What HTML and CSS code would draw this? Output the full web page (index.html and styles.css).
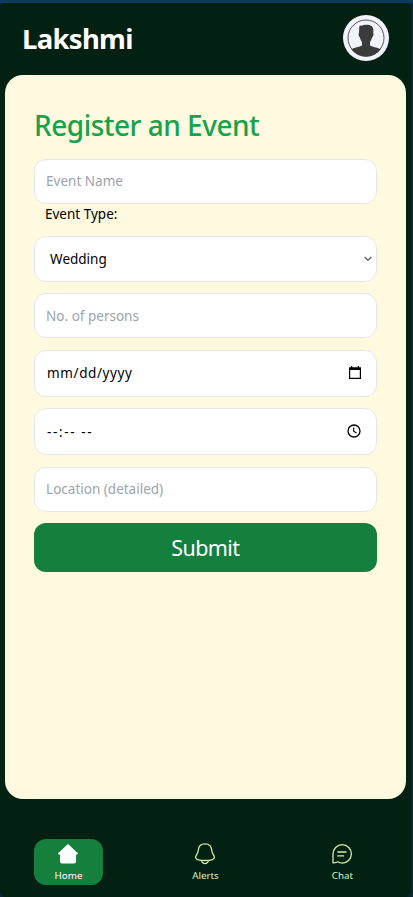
FILE: index.html
```html
<!DOCTYPE html>
<html lang="en">
<head>
<meta charset="utf-8">
<title>Register an Event</title>
<link rel="stylesheet" href="styles.css">
</head>
<body>
<div class="app">
  <header class="header">
    <h1 class="name"><span>Lakshmi</span></h1>
    <svg class="avatar" viewBox="0 0 46 46">
      <circle cx="23" cy="23" r="23" fill="#f3f3fd"/>
      <circle cx="23" cy="23" r="18" fill="none" stroke="#55555a" stroke-width="1"/>
      <path fill="#3b3b3b" d="M16.2 12 17 10.6 19 10.8C21 9.500 26 9.300 28.500 11C30.500 12.500 30.700 15 30.200 18C31 18.600 30.200 22 29 22.500C28.600 24.500 27.800 25.800 27 27V30.500C29.500 32 34 32.300 37.700 34.200A18 18 0 0 1 8.300 34.200C12 32.300 16.500 32 19 30.500V27C18 25.500 17.300 24.500 17 22.500C15.800 21.800 15.200 18.600 16 18Z"/>
    </svg>
  </header>
  <main class="card">
    <h2 class="title"><span>Register an Event</span></h2>
    <form class="form">
      <input class="field" type="text" placeholder="Event Name">
      <label class="label"><span>Event Type:</span></label>
      <div class="field select"><span>Wedding</span>
        <svg class="chevron" viewBox="0 0 8 6"><path d="M.7 1 4 4.300 7.300 1" fill="none" stroke="#666" stroke-width="1.500"/></svg>
      </div>
      <input class="field" type="text" placeholder="No. of persons">
      <div class="field picker"><span class="date">mm/dd/yyyy</span>
        <svg class="calendar" viewBox="0 0 12 13"><path d="M.6 2H11.400V12.300H.6Z" fill="none" stroke="#000" stroke-width="1.200"/><path d="M0 1.500H12V4H0ZM2 0H3.300V2H2ZM8.700 0H10V2H8.700Z"/></svg>
      </div>
      <div class="field picker"><span class="time">--:-- --</span>
        <svg class="clock" viewBox="0 0 14 14"><circle cx="7" cy="7" r="6" fill="none" stroke="#000" stroke-width="1.300"/><path d="M6.700 3.500V7.300L9.500 9" fill="none" stroke="#000" stroke-width="1.100"/></svg>
      </div>
      <input class="field" type="text" placeholder="Location (detailed)">
      <button class="submit" type="button"><span>Submit</span></button>
    </form>
  </main>
  <nav class="nav">
    <a class="tab active">
      <svg class="icon" viewBox="0 0 22 22"><path fill="#fff" d="M11 1 21 10.300 20.500 11.500H19V18.500Q19 20.500 17 20.500H5Q3 20.500 3 18.500V11.500H1.500L1 10.300Z"/></svg>
      <span>Home</span>
    </a>
    <a class="tab">
      <svg class="icon" viewBox="0 0 22 22"><path d="M11 .8C7 .8 4.500 3.500 4.300 7C4.200 11 1.600 12 1.600 14.500C1.600 16.500 5 17.500 11 17.500S20.400 16.500 20.400 14.500C20.400 12 17.800 11 17.700 7C17.500 3.500 15 .8 11 .8ZM7.500 18.300Q11 22.800 14.500 18.300"/></svg>
      <span>Alerts</span>
    </a>
    <a class="tab">
      <svg class="icon" viewBox="0 0 22 22"><path d="M2 19.800V11A9.200 9.200 0 1 1 11 20.100C9.500 20.100 8 19.500 7 18.800Q5 20 2 19.800ZM6.800 9H15M6.800 12.900H12.500"/></svg>
      <span>Chat</span>
    </a>
  </nav>
</div>
</body>
</html>
```
FILE: styles.css
```css
* { box-sizing: border-box; }
body {
  margin: 0;
  height: 897px;
  padding: 3px 2px 0 0;
  overflow: hidden;
  background: linear-gradient(#0a3a5c 0 3px, #0b2735 3px);
  font-family: "Noto Sans", "Open Sans", sans-serif;
}
svg { display: block; flex: none; }
.app {
  height: 894px;
  background: #022113;
  border-radius: 5px;
}
.header {
  height: 72px;
  padding: 0 22px;
  display: flex;
  align-items: center;
  justify-content: space-between;
}
.name { margin: 0; font-size: 27.500px; line-height: 40px; letter-spacing: -0.700px; color: #fff; }
.avatar { width: 46px; height: 46px; margin-top: -2px; }
.card {
  height: 723.5px;
  margin: 0 5px;
  padding: 31px 29px 0;
  border-radius: 18px;
  background: #fef9df;
}
.title { margin: 0; height: 52.500px; font-size: 28px; line-height: 38px; font-weight: 500; letter-spacing: -0.5px; color: #16a34a; }
.form { display: flex; flex-direction: column; }
.field {
  width: 343.400px;
  height: 45px;
  margin: 0 0 11.500px -0.400px;
  padding: 0 11.500px;
  border: 1px solid #e5e7eb;
  border-radius: 12px;
  background: #fff;
  color: #000;
  font: 13.500px "Noto Sans", "Open Sans", sans-serif;
}
.field::placeholder { color: #9ca3af; opacity: 1; }
.field:first-child { margin-bottom: 0; }
.label { height: 32px; padding-left: 11px; font-size: 13.500px; line-height: 21px; }
.select, .picker { display: flex; align-items: center; justify-content: space-between; }
.select { height: 46px; padding: 0 4px 0 15.500px; }
.picker { height: 47px; padding: 0 15px 0 12.500px; }
.date { letter-spacing: 0.600px; }
.time { letter-spacing: 1.600px; }
.chevron { width: 8px; height: 6px; }
.calendar { width: 12px; height: 13px; margin-top: -2px; }
.clock { width: 14px; height: 14px; margin-top: -2px; }
.submit {
  width: 343.400px;
  height: 49px;
  margin-left: -0.400px;
  padding: 0;
  border: 0;
  border-radius: 12px;
  background: #15803d;
  color: #fff;
  font: 21.500px/50px "Noto Sans", "Open Sans", sans-serif;
  letter-spacing: -0.600px;
}
.nav { display: flex; justify-content: space-between; margin: 40.500px 34px 0; }
.tab {
  width: 69px;
  height: 46px;
  padding-top: 4px;
  display: flex;
  flex-direction: column;
  align-items: center;
  border-radius: 12px;
  color: #dcf5b0;
  font-size: 9.800px;
  line-height: 15px;
}
.icon { width: 22px; height: 22px; margin: 0 1px 3px 0; fill: none; stroke: #d5eda9; stroke-width: 1.300; stroke-linejoin: round; stroke-linecap: round; }
.active { background: #15803d; color: #fff; }
.active .icon { stroke: none; }
```
